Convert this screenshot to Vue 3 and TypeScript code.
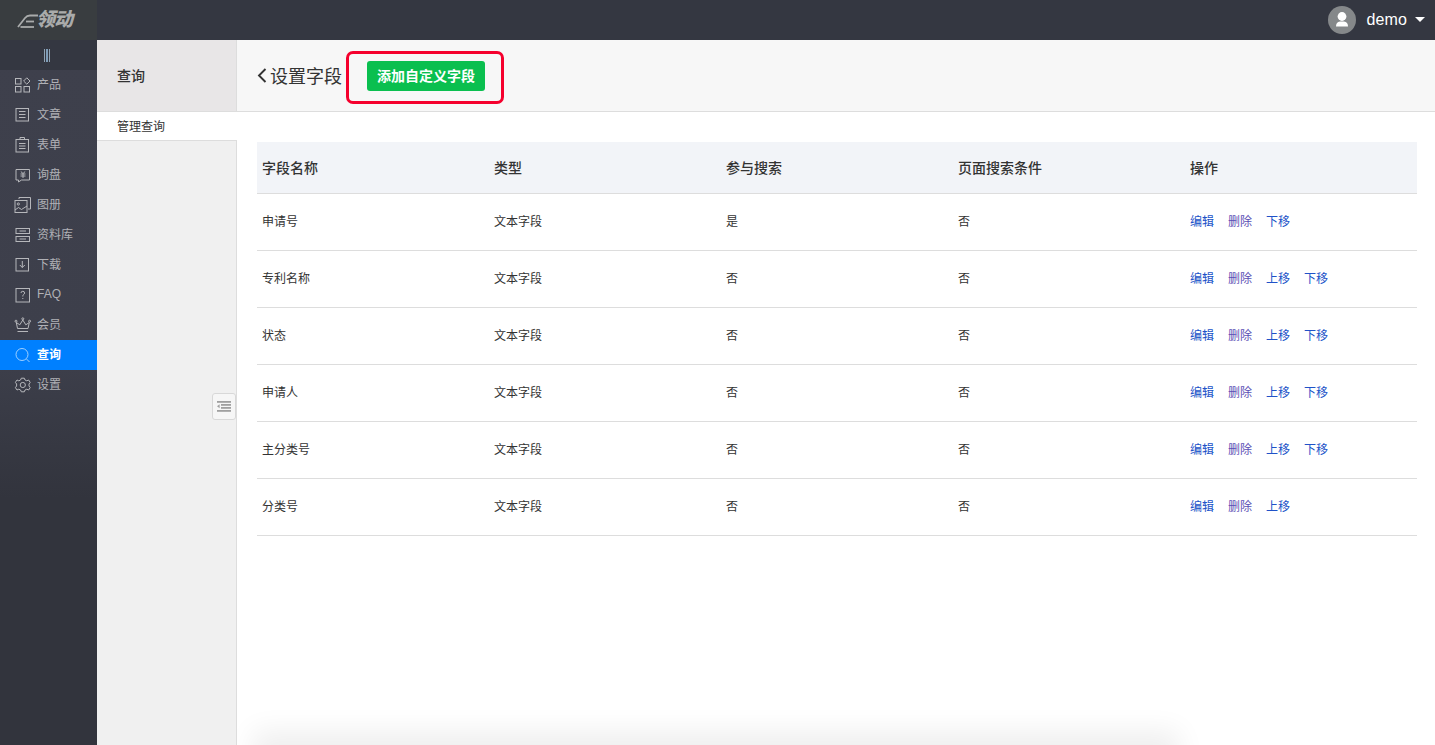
<script setup lang="ts">
interface Row { name: string; type: string; search: string; page: string; ops: string[] }
const menu: { key: string; label: string; active?: boolean }[] = [
  { key: 'product', label: '产品' },
  { key: 'article', label: '文章' },
  { key: 'form', label: '表单' },
  { key: 'inquiry', label: '询盘' },
  { key: 'album', label: '图册' },
  { key: 'library', label: '资料库' },
  { key: 'download', label: '下载' },
  { key: 'faq', label: 'FAQ' },
  { key: 'member', label: '会员' },
  { key: 'query', label: '查询', active: true },
  { key: 'settings', label: '设置' },
]
const columns = ['字段名称', '类型', '参与搜索', '页面搜索条件', '操作']
const rows: Row[] = [
  { name: '申请号', type: '文本字段', search: '是', page: '否', ops: ['编辑', '删除', '下移'] },
  { name: '专利名称', type: '文本字段', search: '否', page: '否', ops: ['编辑', '删除', '上移', '下移'] },
  { name: '状态', type: '文本字段', search: '否', page: '否', ops: ['编辑', '删除', '上移', '下移'] },
  { name: '申请人', type: '文本字段', search: '否', page: '否', ops: ['编辑', '删除', '上移', '下移'] },
  { name: '主分类号', type: '文本字段', search: '否', page: '否', ops: ['编辑', '删除', '上移', '下移'] },
  { name: '分类号', type: '文本字段', search: '否', page: '否', ops: ['编辑', '删除', '上移'] },
]
</script>

<template>
  <div class="app">
    <header class="topbar">
      <div class="logo">
        <svg class="swoosh" width="22" height="16" viewBox="0 0 22 16" fill="none" stroke="#a9abab" stroke-width="1.8">
          <path d="M1 14 L8 5 Q10 2.5 13 2.5 L21 2.5" />
          <path d="M3.5 14 L17 14" />
          <path d="M9 8.5 L17 8.5" />
        </svg>
        <span class="logo-text">领动</span>
      </div>
      <div class="user">
        <span class="avatar">
          <svg width="28" height="28" viewBox="0 0 28 28" fill="#fff">
            <circle cx="14" cy="10.5" r="4.4" />
            <path d="M8 20.5 Q8 15.8 12 15.4 L16 15.4 Q20 15.8 20 20.5 Z" />
          </svg>
        </span>
        <span class="user-name">demo</span>
        <span class="caret"></span>
      </div>
    </header>

    <div class="body">
      <aside class="sidebar">
        <div class="toggle"><span class="toggle-bars"></span></div>
        <nav class="menu">
          <a v-for="m in menu" :key="m.key" class="menu-item" :class="{ active: m.active }">
            <svg class="menu-icon" width="18" height="18" viewBox="0 0 18 18" fill="none" stroke="currentColor" stroke-width="1">
              <template v-if="m.key === 'product'">
                <rect x="1.5" y="2.5" width="5.5" height="5.5" /><rect x="1.5" y="10.5" width="5.5" height="5.5" /><rect x="10" y="10.5" width="5.5" height="5.5" /><path d="M12.8 1.8 L16 5 L12.8 8.2 L9.6 5 Z" />
              </template>
              <template v-else-if="m.key === 'article'">
                <rect x="2" y="2.5" width="12.5" height="12.5" /><path d="M5 5.5H11.5M5 8.5H11.5M5 11.5H11.5" />
              </template>
              <template v-else-if="m.key === 'form'">
                <rect x="2" y="3.5" width="12.5" height="12.5" /><path d="M6 3.5V1.5H10.5V3.5M5 7.5H11.5M5 10H11.5M5 12.5H11.5" />
              </template>
              <template v-else-if="m.key === 'inquiry'">
                <path d="M2 3.5H15.5V14H7.5L4.5 16V14H2Z" /><path d="M6.8 5.5L9 7.5L11.2 5.5M6.5 8H11.5M6.5 10H11.5M9 7.5V12" />
              </template>
              <template v-else-if="m.key === 'album'">
                <path d="M5 3V1.5H16.5V13H14" /><rect x="1" y="4.5" width="12" height="12" /><circle cx="4.3" cy="8" r="1.1" /><path d="M1 14L4.5 11.5L7.5 13.5L13 10" />
              </template>
              <template v-else-if="m.key === 'library'">
                <rect x="2" y="2.5" width="13.5" height="5" /><rect x="2" y="10.5" width="13.5" height="5" /><path d="M5.5 5H12M5.5 13H12" />
              </template>
              <template v-else-if="m.key === 'download'">
                <rect x="2" y="2.5" width="12.5" height="12.5" /><path d="M8.3 5V11.5M5.8 9L8.3 11.5L10.8 9" />
              </template>
              <template v-else-if="m.key === 'faq'">
                <rect x="2" y="2.5" width="13.5" height="13.5" /><path d="M7 7Q7 5.3 8.8 5.3Q10.6 5.3 10.6 7Q10.6 8 9.3 8.8Q8.8 9.2 8.8 10.5M8.8 12V13" />
              </template>
              <template v-else-if="m.key === 'member'">
                <path d="M3.5 12.5L2.3 6.5L5.8 8.8L8.8 4L11.8 8.8L15.3 6.5L14 12.5Z" /><circle cx="8.8" cy="2.8" r="1" /><circle cx="2" cy="5.2" r="1" /><circle cx="15.6" cy="5.2" r="1" /><path d="M3.5 15.5H14" />
              </template>
              <template v-else-if="m.key === 'query'">
                <circle cx="8" cy="8.5" r="6" /><path d="M12.5 13L15.5 16" />
              </template>
              <template v-else>
                <path d="M7.3 2.2H10.3L11 4L12.8 4.8L14.6 4L16.2 6.4L15 8V10L16.2 11.6L14.6 14L12.8 13.2L11 14L10.3 15.8H7.3L6.6 14L4.8 13.2L3 14L1.4 11.6L2.6 10V8L1.4 6.4L3 4L4.8 4.8L6.6 4Z" stroke-linejoin="round" /><circle cx="8.8" cy="9" r="2.6" />
              </template>
            </svg>
            <span>{{ m.label }}</span>
          </a>
        </nav>
      </aside>

      <section class="subnav">
        <div class="subnav-head">查询</div>
        <div class="subnav-link">管理查询</div>
        <div class="subnav-rest"></div>
        <button class="collapse" type="button" aria-label="收起">
          <svg width="14" height="11" viewBox="0 0 14 11" fill="#a0a0a0">
            <rect x="0" y="0" width="14" height="1.8" />
            <rect x="4" y="3" width="10" height="1.8" />
            <rect x="4" y="6" width="10" height="1.8" />
            <rect x="0" y="9" width="14" height="1.8" />
            <path d="M2.6 3.2V7.2L0 5.2Z" />
          </svg>
        </button>
      </section>

      <main class="main">
        <div class="main-head">
          <h1 class="title">
            <svg width="10" height="16" viewBox="0 0 10 16" fill="none" stroke="#333" stroke-width="1.9"><path d="M8.5 2L2 8.5L8.5 15" /></svg>
            <span>设置字段</span>
          </h1>
          <button class="add" type="button">添加自定义字段</button>
          <span class="mark"></span>
        </div>
        <div class="content">
          <table class="table">
            <thead>
              <tr><th v-for="c in columns" :key="c">{{ c }}</th></tr>
            </thead>
            <tbody>
              <tr v-for="r in rows" :key="r.name">
                <td>{{ r.name }}</td>
                <td>{{ r.type }}</td>
                <td>{{ r.search }}</td>
                <td>{{ r.page }}</td>
                <td class="ops">
                  <a v-for="o in r.ops" :key="o" :class="{ visited: o === '删除' }">{{ o }}</a>
                </td>
              </tr>
            </tbody>
          </table>
        </div>
        <div class="ghost"></div>
      </main>
    </div>
  </div>
</template>

<style>
html, body { margin: 0; height: 100%; overflow: hidden; }
</style>

<style scoped>
.app {
  width: 1435px;
  height: 745px;
  display: flex;
  flex-direction: column;
  overflow: hidden;
  font-family: "Liberation Sans", "Noto Sans CJK SC", sans-serif;
  color: #333;
  background: #fff;
}
.topbar {
  height: 40px;
  flex: none;
  background: #343741;
  display: flex;
  align-items: center;
  justify-content: space-between;
}
.logo {
  width: 97px;
  height: 40px;
  background: #393d40;
  display: flex;
  align-items: center;
  box-sizing: border-box;
  padding-left: 17px;
  padding-bottom: 1px;
}
.swoosh { margin-right: -3px; margin-top: 2px; }
.logo-text {
  font-size: 19px;
  line-height: 20px;
  font-weight: 900;
  font-style: italic;
  color: #a9abab;
  letter-spacing: -1px;
}
.user {
  display: flex;
  align-items: center;
  padding-right: 10px;
}
.avatar {
  width: 28px;
  height: 28px;
  border-radius: 50%;
  background: #85888a;
  overflow: hidden;
  display: block;
}
.avatar svg { display: block; }
.user-name {
  margin-left: 11px;
  font-size: 16px;
  letter-spacing: 0.1px;
  color: #fff;
}
.caret {
  margin-left: 8px;
  margin-bottom: 1px;
  border-left: 5px solid transparent;
  border-right: 5px solid transparent;
  border-top: 5px solid #fff;
}
.body {
  flex: 1;
  display: flex;
  min-height: 0;
}
.sidebar {
  width: 97px;
  flex: none;
  background: linear-gradient(#3e404c, #3d3f4b 45%, #32343d 65%);
}
.toggle {
  height: 30px;
  background: #343741;
  display: flex;
  align-items: center;
  justify-content: center;
  padding-right: 4px;
  box-sizing: border-box;
}
.toggle-bars {
  height: 13px;
  width: 6px;
  box-sizing: border-box;
  border-left: 1px solid #8fa3b5;
  border-right: 1px solid #8fa3b5;
  background: linear-gradient(90deg, transparent 33%, #7f9db8 33%, #7f9db8 66%, transparent 66%);
}
.menu { display: flex; flex-direction: column; }
.menu-item {
  height: 30px;
  box-sizing: border-box;
  display: flex;
  align-items: center;
  padding-left: 14px;
  padding-bottom: 1px;
  font-size: 12px;
  color: #b0b1b6;
}
.menu-item span { position: relative; top: -1px; }
.menu-icon { flex: none; margin-right: 5px; color: #b6b7bb; }
.menu-item.active {
  background: #0080ff;
  color: #fff;
  font-weight: 700;
}
.menu-item.active .menu-icon { color: #9fd0ff; }
.subnav {
  width: 140px;
  flex: none;
  position: relative;
  display: flex;
  flex-direction: column;
  box-sizing: border-box;
  background: #f0f0f0;
  border-right: 1px solid #ddd;
}
.subnav-head {
  height: 71px;
  flex: none;
  background: #e8e6e7;
  border-bottom: 1px solid #ddd;
  padding-left: 20px;
  font-size: 14px;
  font-weight: 500;
  line-height: 72px;
  color: #333;
}
.subnav-link {
  height: 28px;
  flex: none;
  margin-right: -1px;
  background: #fff;
  border-bottom: 1px solid #ddd;
  padding-left: 20px;
  font-size: 12px;
  line-height: 30px;
  color: #333;
}
.subnav-rest { flex: 1; }
.collapse {
  position: absolute;
  right: 0;
  top: 353px;
  width: 24px;
  height: 27px;
  padding: 0;
  box-sizing: border-box;
  background: #f6f6f6;
  border: 1px solid #d8d8d8;
  border-radius: 3px;
  display: flex;
  align-items: center;
  justify-content: center;
}
.main {
  flex: 1;
  min-width: 0;
  position: relative;
  overflow: hidden;
}
.main-head {
  height: 72px;
  box-sizing: border-box;
  background: #f7f7f7;
  border-bottom: 1px solid #ddd;
  padding-left: 20px;
  display: flex;
  align-items: center;
  position: relative;
}
.title {
  margin: 0 0 2px;
  font-size: 18px;
  font-weight: 400;
  color: #333;
  display: flex;
  align-items: center;
  gap: 3px;
}
.add {
  margin-left: 25px;
  margin-top: 1px;
  width: 118px;
  height: 30px;
  padding: 0 0 2px;
  border: 0;
  border-radius: 3px;
  background: #0abf4f;
  color: #fff;
  font: 700 14px "Liberation Sans", "Noto Sans CJK SC", sans-serif;
}
.mark {
  position: absolute;
  left: 109px;
  top: 11px;
  width: 158px;
  height: 53px;
  box-sizing: border-box;
  border: 3px solid #f5002d;
  border-radius: 7px;
  pointer-events: none;
}
.content { padding: 30px 18px 0 20px; }
.table {
  width: 1160px;
  border-collapse: collapse;
  table-layout: fixed;
}
.table th {
  height: 49px;
  padding: 0 5px 2px;
  text-align: left;
  font-size: 14px;
  font-weight: 500;
  color: #333;
  background: #f2f4f8;
  border-bottom: 1px solid #ddd;
}
.table td {
  height: 53px;
  padding: 0 5px 3px;
  font-size: 12px;
  color: #333;
  border-bottom: 1px solid #ddd;
}
.ops a {
  color: #2052c8;
  margin-right: 14px;
}
.ops a.visited { color: #5b4fb5; }
.ghost {
  position: absolute;
  left: 30px;
  right: 270px;
  bottom: -30px;
  height: 30px;
  background: #efefef;
  box-shadow: 0 0 28px 14px #efefef;
  pointer-events: none;
}
</style>
